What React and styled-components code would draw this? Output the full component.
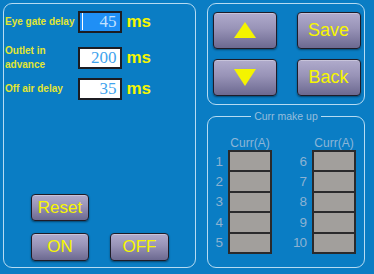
import React from 'react'
import styled, { createGlobalStyle } from 'styled-components'

const GlobalStyle = createGlobalStyle`
  html, body {
    margin: 0;
    padding: 0;
    background: #0a7dc4;
    font-family: "Liberation Sans", Arial, sans-serif;
  }
`

const delays = [
  { label: 'Eye gate delay', value: '45', active: true },
  { label: <>Outlet in<br />advance</>, value: '200' },
  { label: 'Off air delay', value: '35' },
]

const slots = [[1, 2, 3, 4, 5], [6, 7, 8, 9, 10]]

const Triangle = ({ down }) => (
  <svg width="22" height="17" viewBox="0 0 22 17">
    <polygon points={down ? '0,0 22,0 11,17' : '11,0 22,16 0,16'} fill="#f4f400" />
  </svg>
)

const App = () => {
  return (
    <Screen>
      <GlobalStyle />
      <LeftPanel>
        <Settings>
          {delays.map((d, i) => (
            <Row key={i}>
              <Label>{d.label}</Label>
              <ValueBox $active={d.active}>
                {d.active ? <Caret /> : <span />}
                {d.value}
              </ValueBox>
              <Unit>ms</Unit>
            </Row>
          ))}
        </Settings>
        <Controls>
          <Button $w={58} $h={27}>Reset</Button>
          <ButtonRow>
            <Button $w={58} $h={28}>ON</Button>
            <Button $w={59} $h={28}>OFF</Button>
          </ButtonRow>
        </Controls>
      </LeftPanel>

      <RightColumn>
        <NavPanel>
          <Button $w={64} $h={37}><Triangle /></Button>
          <Button $w={64} $h={37} $big>Save</Button>
          <Button $w={64} $h={37}><Triangle down /></Button>
          <Button $w={64} $h={37} $big>Back</Button>
        </NavPanel>

        <CurrPanel>
          <Legend>Curr make up</Legend>
          <Columns>
            {slots.map((col, c) => (
              <Column key={c}>
                <Header>Curr(A)</Header>
                {col.map((n) => (
                  <Slot key={n}>
                    <SlotNum>{n}</SlotNum>
                    <Cell />
                  </Slot>
                ))}
              </Column>
            ))}
          </Columns>
        </CurrPanel>
      </RightColumn>
    </Screen>
  )
}

export default App

const Screen = styled.div`
  width: 374px;
  height: 274px;
  box-sizing: border-box;
  padding: 3px 0 0 3px;
  display: flex;
  gap: 11px;
  overflow: hidden;
`

const Panel = styled.div`
  box-sizing: border-box;
  border: 1.5px solid #b6dbf2;
  border-radius: 9px;
`

const LeftPanel = styled(Panel)`
  width: 193px;
  height: 265px;
  display: flex;
  flex-direction: column;
  justify-content: space-between;
  padding: 6.5px 0 6.5px 1px;
`

const Settings = styled.div`
  display: flex;
  flex-direction: column;
  gap: 11.5px;
`

const Row = styled.div`
  display: grid;
  grid-template-columns: 67.5px 44px auto;
  column-gap: 5px;
  align-items: center;
  height: 22px;
`

const Label = styled.div`
  color: #e2e632;
  font-size: 10px;
  font-weight: bold;
  line-height: 14px;
  white-space: nowrap;
`

const ValueBox = styled.div`
  box-sizing: border-box;
  height: 22px;
  display: flex;
  align-items: center;
  justify-content: space-between;
  padding: 0 3px 0 2px;
  border: 2px solid #1c1c22;
  background: ${(p) => (p.$active ? '#1f8ff5' : '#ffffff')};
  color: ${(p) => (p.$active ? '#c4e2ff' : '#3fa3ee')};
  font-family: "Liberation Serif", "Times New Roman", serif;
  font-size: 17px;
`

const Caret = styled.span`
  width: 1.5px;
  height: 17px;
  background: #ffffff;
`

const Unit = styled.div`
  color: #f6f600;
  font-size: 17px;
  font-weight: bold;
`

const Controls = styled.div`
  display: flex;
  flex-direction: column;
  gap: 12px;
  padding-left: 26px;
`

const ButtonRow = styled.div`
  display: flex;
  gap: 21px;
`

const Button = styled.div`
  box-sizing: border-box;
  width: ${(p) => p.$w}px;
  height: ${(p) => p.$h}px;
  display: flex;
  align-items: center;
  justify-content: center;
  border: 1.5px solid #1e1c28;
  border-radius: 4px;
  background: linear-gradient(#b0abcc 0%, #9893b7 45%, #6c6990 100%);
  box-shadow: inset 0 1px 0 rgba(255, 255, 255, 0.3), 0 1px 2px rgba(0, 0, 0, 0.45);
  color: #f6f600;
  font-size: ${(p) => (p.$big ? 18 : 17)}px;
  line-height: 1;
`

const RightColumn = styled.div`
  width: 158px;
  height: 265px;
  display: flex;
  flex-direction: column;
  gap: 5px;
`

const NavPanel = styled(Panel)`
  height: 102px;
  padding: 7.5px 0 0 4.5px;
  display: grid;
  grid-template-columns: 64px 64px;
  grid-template-rows: 37px 37px;
  column-gap: 20px;
  row-gap: 10px;
`

const CurrPanel = styled.fieldset`
  flex: 1;
  min-width: 0;
  margin: 0;
  padding: 15px 0 0 0;
  border: 1.5px solid #b6dbf2;
  border-radius: 9px;
`

const Legend = styled.legend`
  margin: 0 auto;
  padding: 0 3px;
  color: #96bedc;
  font-size: 10.5px;
  line-height: 12px;
`

const Columns = styled.div`
  display: flex;
  gap: 20px;
`

const Column = styled.div`
  display: flex;
  flex-direction: column;
  width: 64px;
`

const Header = styled.div`
  height: 13px;
  padding-left: 20px;
  text-align: center;
  color: #8cb6d8;
  font-size: 12px;
  line-height: 13px;
  white-space: nowrap;
`

const Slot = styled.div`
  display: flex;
  align-items: center;
  gap: 6px;

  & + & {
    margin-top: -2px;
  }
`

const SlotNum = styled.div`
  width: 14px;
  text-align: right;
  color: #8cb2d2;
  font-size: 13.5px;
  letter-spacing: -1px;
`

const Cell = styled.div`
  box-sizing: border-box;
  width: 44px;
  height: 22.4px;
  border: 2px solid #2a2a2c;
  background: #a29f9c;
`
